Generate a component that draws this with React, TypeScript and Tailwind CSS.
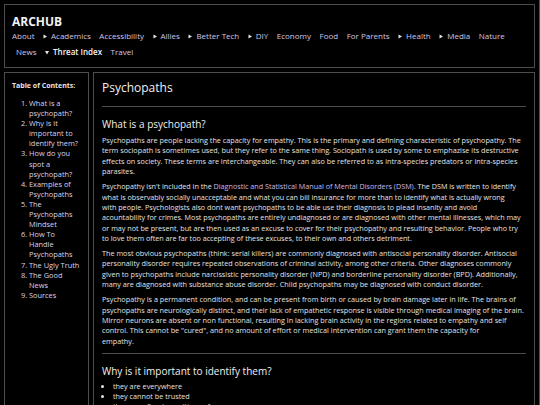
import React from "react";

const navRow1: { label: string; arrow?: boolean }[] = [
  { label: "About" },
  { label: "Academics", arrow: true },
  { label: "Accessibility" },
  { label: "Allies", arrow: true },
  { label: "Better Tech", arrow: true },
  { label: "DIY", arrow: true },
  { label: "Economy" },
  { label: "Food" },
  { label: "For Parents" },
  { label: "Health", arrow: true },
  { label: "Media", arrow: true },
  { label: "Nature" },
];

const toc = [
  "What is a psychopath?",
  "Why is it important to identify them?",
  "How do you spot a psychopath?",
  "Examples of Psychopaths",
  "The Psychopaths Mindset",
  "How To Handle Psychopaths",
  "The Ugly Truth",
  "The Good News",
  "Sources",
];

function Tri({ down }: { down?: boolean }) {
  return (
    <svg width="4" height="5" viewBox="0 0 4 5" className="mr-[4px] shrink-0">
      {down ? (
        <polygon points="0,1 4,1 2,4.5" fill="#e6e6e6" />
      ) : (
        <polygon points="0.5,0.5 4,2.5 0.5,4.5" fill="#e6e6e6" />
      )}
    </svg>
  );
}

export default function App() {
  return (
    <div
      className="min-h-[405px] bg-black text-[#e4e4e4] pl-[4px] pr-[4px] pt-[4px] border-r border-[#4d4d4d]"
      style={{ fontFamily: '"Open Sans", "Noto Sans", sans-serif' }}
    >
      <header className="border border-[#4d4d4d] px-[7px] pt-[11px] pb-[7px]">
        <div className="text-[12px] font-bold leading-[12px] text-[#f2f2f2]">ARCHUB</div>
        <nav className="text-[8px] leading-[16px] text-[#d2c6e4]">
          <div className="flex gap-x-[8.5px]">
            {navRow1.map((n) => (
              <span key={n.label} className="flex items-center">
                {n.arrow && <Tri />}
                {n.label}
              </span>
            ))}
          </div>
          <div className="flex gap-x-[8.5px] pl-[4px]">
            <span>News</span>
            <span className="flex items-center text-[#f4f4f4] font-semibold">
              <Tri down />
              Threat Index
            </span>
            <span>Travel</span>
          </div>
        </nav>
      </header>

      <div className="flex gap-[4px] mt-[4px]">
        <aside className="w-[85px] shrink-0 border border-[#4d4d4d] pl-[7px] pr-[7.5px] pt-[8px]">
          <div className="text-[7px] font-bold leading-[10px] whitespace-nowrap">Table of Contents:</div>
          <ol className="mt-[7px] pl-[17px] list-decimal text-[7.4px] leading-[10.1px] text-[#dcd2ec]">
            {toc.map((t) => (
              <li key={t}>{t}</li>
            ))}
          </ol>
        </aside>

        <main className="flex-1 border border-[#4d4d4d] px-[8px] pt-[7px] pb-[20px]">
          <h1 className="text-[12px] leading-[16px] font-medium text-[#f0f0f0]">Psychopaths</h1>
          <hr className="mt-[10px] border-t border-[#4d4d4d]" />
          <h2 className="mt-[10px] text-[10px] leading-[14px] font-medium text-[#f0f0f0]">What is a psychopath?</h2>
          <div className="text-[7.25px] leading-[10.4px] mt-[4px]">
            <p>
              Psychopaths are people lacking the capacity for empathy. This is the primary and defining characteristic of
              psychopathy. The term sociopath is sometimes used, but they refer to the same thing. Sociopath is used by some
              to emphazise its destructive effects on society. These terms are interchangeable. They can also be referred to
              as intra-species predators or intra-species parasites.
            </p>
            <p className="mt-[4.5px] text-[7.2px]">
              Psychopathy isn't included in the{" "}
              <span className="text-[#cbb8ec]">Diagnostic and Statistical Manual of Mental Disorders (DSM)</span>. The DSM
              is written to identify what is observably socially unacceptable and what you can bill insurance for more than
              to identify what is actually wrong
              <br />
              with people. Psychologists also dont want psychopaths to be able use their diagnosis to plead insanity and
              avoid
              <br />
              acountability for crimes. Most psychopaths are entirely undiagnosed or are diagnosed with other mental
              illnesses, which may
              <br />
              or may not be present, but are then used as an excuse to cover for their psychopathy and resulting behavior.
              People who try
              <br />
              to love them often are far too accepting of these excuses, to their own and others detriment.
            </p>
            <p className="mt-[4.5px]">
              The most obvious psychopaths (think: serial killers) are commonly diagnosed with antisocial personality
              disorder. Antisocial personality disorder requires repeated observations of criminal activity, among other
              criteria. Other diagnoses commonly given to psychopaths include narcissistic personality disorder (NPD) and
              borderline personality disorder (BPD). Additionally, many are diagnosed with substance abuse disorder. Child
              psychopaths may be diagnosed with conduct disorder.
            </p>
            <p className="mt-[4.5px]">
              Psychopathy is a permanent condition, and can be present from birth or caused by brain damage later in life.
              The brains of psychopaths are neurologically distinct, and their lack of empathetic response is visible through
              medical imaging of the brain. Mirror neurons are absent or non functional, resulting in lacking brain activity
              in the regions related to empathy and self control. This cannot be "cured", and no amount of effort or medical
              intervention can grant them the capacity for
              <br />
              empathy.
            </p>
          </div>
          <hr className="mt-[7px] border-t border-[#4d4d4d]" />
          <h2 className="mt-[10px] text-[10px] leading-[14px] font-medium text-[#f0f0f0]">
            Why is it important to identify them?
          </h2>
          <ul className="mt-[3px] pl-[11px] list-disc text-[7.25px] leading-[10px]">
            <li>they are everywhere</li>
            <li>they cannot be trusted</li>
            <li>they are often in positions of power</li>
            <li>they cause immense harm to those around them</li>
          </ul>
        </main>
      </div>
    </div>
  );
}
